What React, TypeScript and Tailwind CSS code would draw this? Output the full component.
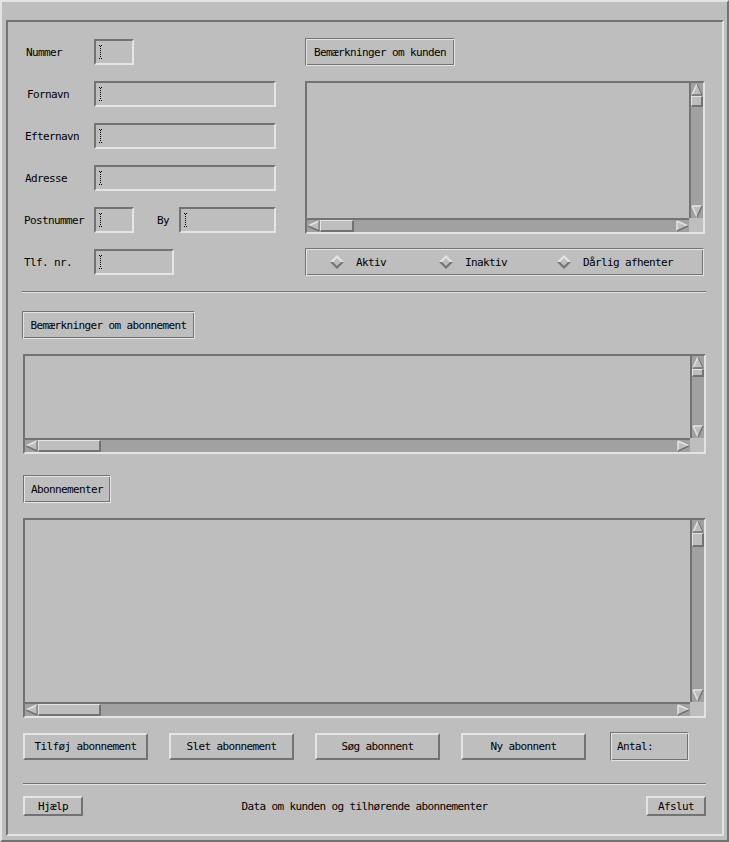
import React from 'react';

// motif-ish shadow styles
const raised = "border-2 border-t-[#e4e4e4] border-l-[#e4e4e4] border-b-[#737373] border-r-[#737373]";
const sunken = "border-2 border-t-[#737373] border-l-[#737373] border-b-[#e4e4e4] border-r-[#e4e4e4]";
const etched = "border border-t-[#737373] border-l-[#737373] border-b-[#e4e4e4] border-r-[#e4e4e4] shadow-[inset_1px_1px_0_#e4e4e4,inset_-1px_-1px_0_#737373]";

const IBeam = () => (
  <svg width="3" height="14" viewBox="0 0 3 14" shapeRendering="crispEdges">
    <rect x="0" y="0" width="1" height="1" fill="#000" />
    <rect x="2" y="0" width="1" height="1" fill="#000" />
    {[1, 3, 5, 7, 9, 11].map((y) => (
      <rect key={y} x="1" y={y} width="1" height="1" fill="#000" />
    ))}
    <rect x="0" y="13" width="1" height="1" fill="#000" />
    <rect x="2" y="13" width="1" height="1" fill="#000" />
  </svg>
);

const Field = ({ className }: { className: string }) => (
  <div className={`${sunken} h-[26px] flex items-center pl-[3px] ${className}`}>
    <IBeam />
  </div>
);

const Arrow = ({ dir }: { dir: 'up' | 'down' | 'left' | 'right' }) => {
  if (dir === 'up')
    return (
      <svg width="12" height="13" viewBox="0 0 12 13" className="shrink-0">
        <polygon points="6,1 1,12 11,12" fill="#bebebe" />
        <line x1="1" y1="12" x2="6" y2="1" stroke="#e4e4e4" strokeWidth="1.5" />
        <line x1="6" y1="1" x2="11" y2="12" stroke="#737373" strokeWidth="1" />
        <line x1="1" y1="12" x2="11" y2="12" stroke="#737373" strokeWidth="1.5" />
      </svg>
    );
  if (dir === 'down')
    return (
      <svg width="12" height="13" viewBox="0 0 12 13" className="shrink-0">
        <polygon points="1,1 11,1 6,12" fill="#bebebe" />
        <line x1="1" y1="1" x2="11" y2="1" stroke="#e4e4e4" strokeWidth="1.5" />
        <line x1="1" y1="1" x2="6" y2="12" stroke="#e4e4e4" strokeWidth="1.5" />
        <line x1="11" y1="1" x2="6" y2="12" stroke="#737373" strokeWidth="1.5" />
      </svg>
    );
  if (dir === 'left')
    return (
      <svg width="13" height="12" viewBox="0 0 13 12" className="shrink-0">
        <polygon points="1,6 12,1 12,11" fill="#bebebe" />
        <line x1="1" y1="6" x2="12" y2="1" stroke="#e4e4e4" strokeWidth="1.5" />
        <line x1="1" y1="6" x2="12" y2="11" stroke="#737373" strokeWidth="1.5" />
        <line x1="12" y1="1" x2="12" y2="11" stroke="#737373" strokeWidth="1" />
      </svg>
    );
  return (
    <svg width="13" height="12" viewBox="0 0 13 12" className="shrink-0">
      <polygon points="1,1 12,6 1,11" fill="#bebebe" />
      <line x1="1" y1="1" x2="1" y2="11" stroke="#e4e4e4" strokeWidth="1.5" />
      <line x1="1" y1="1" x2="12" y2="6" stroke="#e4e4e4" strokeWidth="1.5" />
      <line x1="1" y1="11" x2="12" y2="6" stroke="#737373" strokeWidth="1.5" />
    </svg>
  );
};

const thumb = "border-t border-l border-b-2 border-r-2 border-t-[#e4e4e4] border-l-[#e4e4e4] border-b-[#737373] border-r-[#737373] bg-[#bebebe]";

// scrolled text / list with both scrollbars
const ScrollBox = ({ className, vThumb, hThumb }: { className: string; vThumb: string; hThumb: string }) => (
  <div className={`${sunken} grid grid-cols-[1fr_14px] grid-rows-[1fr_14px] ${className}`}>
    <div />
    <div className="border-l-2 border-l-[#737373] bg-[#a1a1a1] flex flex-col justify-between">
      <div className="flex flex-col">
        <Arrow dir="up" />
        <div className={`${thumb} w-[12px] ${vThumb}`} />
      </div>
      <Arrow dir="down" />
    </div>
    <div className="border-t-2 border-t-[#737373] bg-[#a1a1a1] flex justify-between">
      <div className="flex">
        <Arrow dir="left" />
        <div className={`${thumb} h-[12px] ${hThumb}`} />
      </div>
      <Arrow dir="right" />
    </div>
    <div className="bg-[#bebebe]" />
  </div>
);

const Diamond = () => (
  <svg width="14" height="14" viewBox="0 0 14 14" className="shrink-0">
    <polygon points="0,7 7,0 14,7" fill="#e4e4e4" />
    <polygon points="0,7 7,14 14,7" fill="#737373" />
    <polygon points="7,3 11,7 7,11 3,7" fill="#bebebe" />
  </svg>
);

const Separator = ({ className }: { className: string }) => (
  <div className={`h-[2px] border-t border-b border-t-[#737373] border-b-[#e4e4e4] ${className}`} />
);

const rows = [
  { label: 'Nummer', pad: 'pl-[18px]', field: 'w-[40px]' },
  { label: 'Fornavn', pad: 'pl-[19px]', field: 'w-[182px]' },
  { label: 'Efternavn', pad: 'pl-[17px]', field: 'w-[182px]' },
  { label: 'Adresse', pad: 'pl-[17px]', field: 'w-[182px]' },
];

const actions = ['Tilføj abonnement', 'Slet abonnement', 'Søg abonnent', 'Ny abonnent'];

export default function App() {
  return (
    <div className="w-[729px] h-[842px] bg-[#bebebe] text-black border-2 border-t-[#e4e4e4] border-l-[#e4e4e4] border-b-[#737373] border-r-[#737373] pt-[18px] pl-[4px] pr-[3px] pb-[4px] font-['DejaVu_Sans_Mono',monospace] text-[11px] tracking-[-0.62px] leading-none">
      <div className={`${sunken} w-full h-full flex flex-col`}>
        {/* kunde */}
        <div className="flex pt-[16px]">
          <div className="w-[297px] flex flex-col gap-[16px] pt-px">
            {rows.map((r) => (
              <div key={r.label} className="h-[26px] flex items-center">
                <div className={`w-[86px] shrink-0 ${r.pad}`}>{r.label}</div>
                <Field className={r.field} />
              </div>
            ))}
            <div className="h-[26px] flex items-center">
              <div className="w-[86px] shrink-0 pl-[16px]">Postnummer</div>
              <Field className="w-[40px]" />
              <div className="ml-[23px] w-[12px]">By</div>
              <Field className="ml-[10px] w-[97px]" />
            </div>
            <div className="h-[26px] flex items-center">
              <div className="w-[86px] shrink-0 pl-[16px]">Tlf. nr.</div>
              <Field className="w-[80px]" />
            </div>
          </div>

          <div className="w-[400px] flex flex-col">
            <div className={`${etched} w-[150px] h-[28px] flex items-center justify-center`}>Bemærkninger om kunden</div>
            <ScrollBox className="mt-[15px] w-[400px] h-[153px]" vThumb="h-[11px]" hThumb="w-[34px]" />
            <div className={`${etched} mt-[14px] w-[399px] h-[28px] flex items-center pl-[24px]`}>
              <Diamond />
              <span className="ml-[12px]">Aktiv</span>
              <span className="ml-[53px]"><Diamond /></span>
              <span className="ml-[12px]">Inaktiv</span>
              <span className="ml-[50px]"><Diamond /></span>
              <span className="ml-[12px]">Dårlig afhenter</span>
            </div>
          </div>
        </div>

        <Separator className="mt-[15px] ml-[14px] w-[684px]" />

        {/* abonnement */}
        <div className={`${etched} mt-[18px] ml-[14px] w-[173px] h-[28px] flex items-center justify-center`}>Bemærkninger om abonnement</div>
        <ScrollBox className="mt-[15px] ml-[15px] w-[683px] h-[100px]" vThumb="h-[8px]" hThumb="w-[63px]" />

        <div className={`${etched} mt-[21px] ml-[15px] w-[88px] h-[28px] flex items-center justify-center`}>Abonnementer</div>
        <ScrollBox className="mt-[15px] ml-[15px] w-[683px] h-[200px]" vThumb="h-[14px]" hThumb="w-[63px]" />

        <div className="mt-[15px] ml-[15px] h-[27px] flex items-center">
          {actions.map((a, i) => (
            <div key={a} className={`${raised} w-[125px] h-[27px] flex items-center justify-center ${i > 0 ? 'ml-[21px]' : ''}`}>
              {a}
            </div>
          ))}
          <div className={`${etched} ml-[24px] w-[79px] h-[29px] flex items-center pl-[6px]`}>Antal:</div>
        </div>

        <Separator className="mt-[23px] ml-[15px] w-[683px]" />

        <div className="mt-[11px] ml-[15px] w-[683px] h-[20px] flex items-center justify-between">
          <div className={`${raised} w-[60px] h-[20px] flex items-center justify-center`}>Hjælp</div>
          <div className="flex-1 text-center">Data om kunden og tilhørende abonnementer</div>
          <div className={`${raised} w-[60px] h-[20px] flex items-center justify-center`}>Afslut</div>
        </div>
      </div>
    </div>
  );
}
